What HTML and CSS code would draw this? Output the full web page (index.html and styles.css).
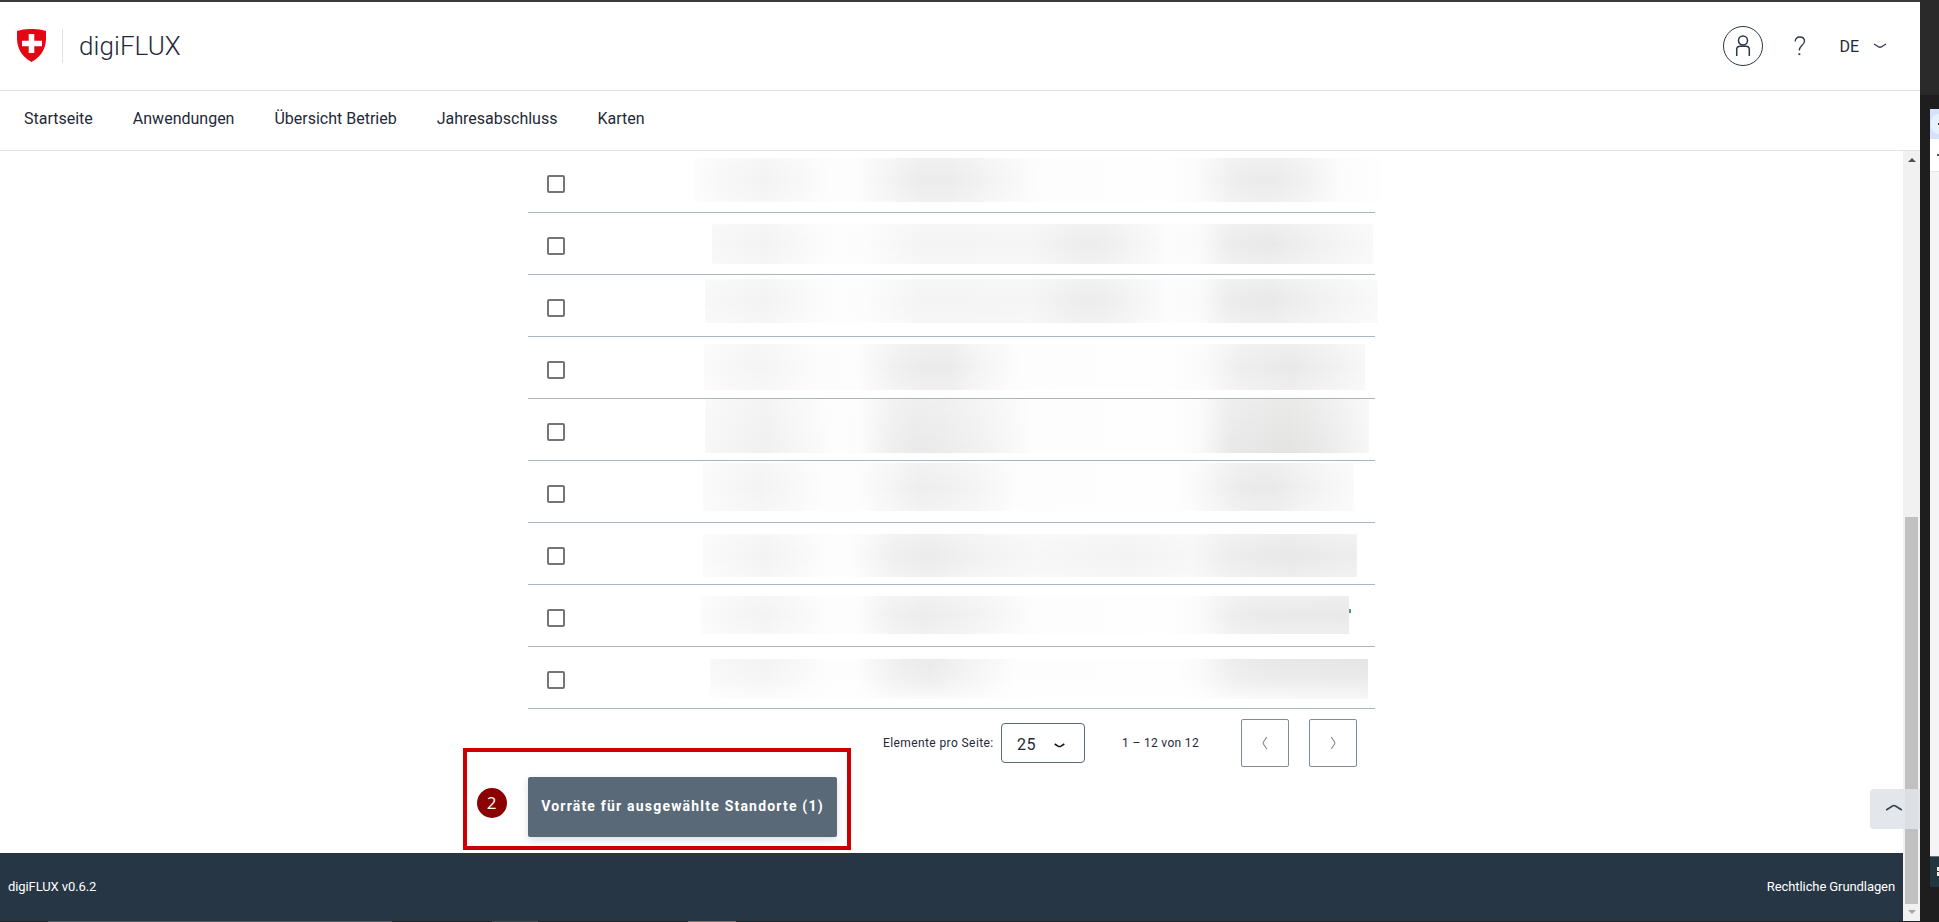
FILE: index.html
```html
<!DOCTYPE html>
<html lang="de">
<head>
<meta charset="utf-8">
<title>digiFLUX</title>
<link rel="stylesheet" href="styles.css">
</head>
<body>
<div class="desktop">
  <div class="app">
    <header class="header">
      <svg class="shield" width="29" height="33" viewBox="0 0 29 33"><path fill="#e30613" d="M0 2C9-.7 20-.7 29 2c.3 12 .3 22-14.500 31C-.3 24-.3 14 0 2z"/><path fill="#fff" d="M11.700 5h5.600v6.700H25v5.600h-7.700V24h-5.600v-6.700H5v-5.600h6.700z"/></svg>
      <span class="divider"></span>
      <span class="brand">digiFLUX</span>
      <div class="tools">
        <span class="user"><svg width="16" height="24" viewBox="0 0 16 24" fill="none" stroke="#2a3746" stroke-width="1.500"><circle cx="8" cy="6.500" r="4.500"/><path d="M1.700 22v-6.500c0-2 1.300-3.300 3.300-3.300h6c2 0 3.300 1.300 3.300 3.300V22"/></svg></span>
        <svg class="help" width="12" height="20" viewBox="0 0 12 20" fill="none" stroke="#2a3746" stroke-width="1.300"><path d="M1.200 5.500C1.200 2.700 3 1 5.800 1s4.700 1.700 4.700 4.300c0 3.900-5.200 4.200-5.200 9.200"/><path d="M4.400 18.200h1.900" stroke-width="1.800"/></svg>
        <span class="lang">DE</span>
        <svg width="14" height="6" viewBox="0 0 14 6" fill="none" stroke="#2a3746" stroke-width="1.200"><path d="M1 1l4 2.600c1.400.7 2.600.7 4 0L13 1"/></svg>
      </div>
    </header>
    <nav class="nav"><a>Startseite</a><a>Anwendungen</a><a>Übersicht Betrieb</a><a>Jahresabschluss</a><a>Karten</a></nav>
    <div class="view">
      <div class="page">
        <main class="content">
          <div class="row"><i class="check"></i><div class="veil v1"></div></div>
          <div class="row"><i class="check"></i><div class="veil v2 long"></div></div>
          <div class="row"><i class="check"></i><div class="veil v3 long"></div></div>
          <div class="row"><i class="check"></i><div class="veil v4"></div></div>
          <div class="row"><i class="check"></i><div class="veil v5 dark"></div></div>
          <div class="row"><i class="check"></i><div class="veil v6"></div></div>
          <div class="row"><i class="check"></i><div class="veil v7 filled"></div></div>
          <div class="row"><i class="check"></i><div class="veil v8"></div><i class="speck"></i></div>
          <div class="row"><i class="check"></i><div class="veil v9"></div></div>
          <div class="pager">
            <span class="label">Elemente pro Seite:</span>
            <span class="select">25<svg width="11" height="6" viewBox="0 0 11 6" fill="none" stroke="#111" stroke-width="1.500"><path d="M.7 1l3.300 2.100c1.100.6 1.900.6 3 0L10.300 1"/></svg></span>
            <span class="range">1 – 12 von 12</span>
            <span class="step"><svg width="6" height="14" viewBox="0 0 6 14" fill="none" stroke="#7b8896" stroke-width="1.100"><path d="M4.800 1L1.700 5.500c-.7 1-.7 2 0 3L4.800 13"/></svg></span>
            <span class="step"><svg width="6" height="14" viewBox="0 0 6 14" fill="none" stroke="#7b8896" stroke-width="1.100"><path d="M1.200 1l3.100 4.500c.7 1 .7 2 0 3L1.200 13"/></svg></span>
          </div>
          <button class="action">Vorräte für ausgewählte Standorte (1)</button>
        </main>
        <footer class="footer"><span>digiFLUX v0.6.2</span><span>Rechtliche Grundlagen</span></footer>
      </div>
      <div class="scroll"><i class="up"></i><i class="thumb"></i><i class="down"></i></div>
    </div>
    <div class="taskbar"><i class="t1"></i><i class="t2"></i><i class="t3"></i></div>
    <div class="highlight"><span class="number">2</span></div>
    <div class="top"><svg width="18" height="7" viewBox="0 0 18 7" fill="none" stroke="#35414f" stroke-width="1.500"><path d="M1.200 6L7.500 2c1-.6 2-.6 3 0l6.300 4"/></svg></div>
  </div>
  <div class="behind">
    <div class="window"><div class="tab"><i></i></div><div class="bar"><i></i></div><div class="body"></div><div class="foot"><i></i></div></div>
  </div>
</div>
</body>
</html>
```
FILE: styles.css
```css
* { box-sizing: border-box; }
body { margin: 0; overflow: hidden; font-family: Roboto, sans-serif; color: #1f2937; background: #1e1e1e; }
.desktop { display: flex; width: 1939px; height: 922px; }
.app { position: relative; display: flex; flex-direction: column; width: 1920px; background: #fff; border-top: 2px solid #3b393a; }

.header { display: flex; align-items: center; height: 89px; padding: 0 33px 0 17px; border-bottom: 1px solid #e0e1e4; }
.shield { margin-top: -1px; }
.divider { width: 1px; height: 34px; margin: 0 16px; background: #dfe1e4; }
.brand { font-size: 26px; font-weight: 300; line-height: 30px; margin-top: -1px; letter-spacing: .08px; }
.tools { display: flex; align-items: center; margin-left: auto; }
.user { display: flex; align-items: center; justify-content: center; width: 40px; height: 40px; border: 1px solid #2a3746; border-radius: 50%; }
.help { margin-left: 31px; }
.lang { margin: 1px 14px 0 33px; font-size: 16px; line-height: 20px; }

.nav { display: flex; gap: 40px; height: 60px; padding: 0 24px; align-items: center; font-size: 16px; border-bottom: 1px solid #dfe4e9; }
.nav a { margin-top: -4px; }

.view { display: flex; height: 770px; }
.page { display: flex; flex-direction: column; width: 1903px; }
.content { display: flex; flex-direction: column; width: 847px; height: 702px; margin-left: 528px; }

.row { display: flex; height: 62px; flex: none; border-bottom: 1px solid #acb4c0; }
.check { width: 18px; height: 18px; margin: 24px 0 0 19px; border: 2px solid #757575; border-radius: 2px; flex: none; }
.veil {
  --veil: linear-gradient(90deg, #fdfdfd 0, #f8f8f8 30px, #f3f3f3 75px, #f8f8f8 110px, #fdfdfd 140px, #fdfdfd 165px, #f3f3f3 200px, #ececec 230px, #ececec 260px, #f3f3f3 300px, #fdfdfd 350px, #fefefe 480px, #fbfbfb 505px, #efefef 540px, #ebebeb 565px, #ebebeb 585px, #f2f2f2 620px, #fcfcfc 650px, #fefefe 685px);
  flex: none;
  background-image: linear-gradient(rgba(255,255,255,.25), rgba(255,255,255,0) 50%, rgba(255,255,255,.25)), var(--veil);
  background-size: auto, 700px 100%;
  background-position: 0 0, var(--shift) 0;
}
.long { --veil: linear-gradient(90deg, #f9f9f9 0, #f3f3f3 75px, #f9f9f9 115px, #fdfdfd 145px, #fcfcfc 175px, #f4f4f4 230px, #f5f5f5 340px, #ededed 390px, #ededed 410px, #f3f3f3 440px, #fcfcfc 480px, #fafafa 510px, #ececec 540px, #e9e9e9 580px, #f1f1f1 630px, #fbfbfb 700px); }
.dark { --veil: linear-gradient(90deg, #f9f9f9 0, #f0f0f0 75px, #f7f7f7 110px, #fdfdfd 145px, #fcfcfc 170px, #efefef 200px, #eaeaea 225px, #ebebeb 250px, #f1f1f1 290px, #fdfdfd 345px, #fefefe 480px, #fafafa 510px, #e9e9e9 540px, #e3e3e2 600px, #eaeaea 635px, #f7f7f7 680px); }
.filled { --veil: linear-gradient(90deg, #fcfcfc 0, #f3f3f3 75px, #fdfdfd 140px, #fdfdfd 160px, #efefef 205px, #ebebeb 240px, #f1f1f1 280px, #f7f7f7 345px, #f3f3f3 440px, #f7f7f7 500px, #ededed 540px, #e8e8e8 600px, #eeeeee 670px); }
.v1 { --shift: -4px; margin: 7px 0 0 129px; width: 688px; height: 44px; }
.v2 { --shift: -22px; margin: 11px 0 0 147px; width: 661px; height: 40px; }
.v3 { --shift: -15px; margin: 4px 0 0 140px; width: 673px; height: 44px; }
.v4 { --shift: -14px; margin: 7px 0 0 139px; width: 661px; height: 46px; --veil: linear-gradient(90deg, #fcfcfc 0, #f4f4f4 70px, #fcfcfc 130px, #fdfdfd 165px, #f0f0f0 205px, #ebebeb 235px, #ebebeb 260px, #f3f3f3 285px, #fdfdfd 330px, #fefefe 480px, #fafafa 515px, #eeeeee 550px, #e9e9e9 600px, #f0f0f0 640px, #f8f8f8 680px); }
.v5 { --shift: -15px; margin: 0 0 0 140px; width: 664px; height: 54px; background-image: linear-gradient(rgba(255,255,255,.25), rgba(255,255,255,0)), var(--veil); }
.v6 { --shift: -13px; margin: 2px 0 0 138px; width: 651px; height: 48px; --veil: linear-gradient(90deg, #fcfcfc 0, #f3f3f3 70px, #fdfdfd 135px, #fdfdfd 165px, #f4f4f4 205px, #eeeeee 230px, #f0f0f0 255px, #f4f4f4 285px, #fdfdfd 330px, #fefefe 485px, #fafafa 505px, #ededed 545px, #eaeaea 565px, #eaeaea 585px, #f1f1f1 615px, #fafafa 665px); }
.v7 { --shift: -13px; margin: 11px 0 0 138px; width: 654px; height: 43px; }
.v8 { --shift: -11px; margin: 11px 0 0 136px; width: 648px; height: 38px; --veil: linear-gradient(90deg, #fcfcfc 0, #f3f3f3 75px, #fdfdfd 140px, #fdfdfd 165px, #f1f1f1 200px, #ececec 235px, #f3f3f3 290px, #fdfdfd 345px, #fefefe 480px, #fafafa 510px, #ededed 545px, #eaeaea 580px, #e9e9e9 660px); }
.v9 { --shift: -20px; margin: 12px 0 0 145px; width: 658px; height: 40px; --veil: linear-gradient(90deg, #fafafa 0, #f3f3f3 75px, #fdfdfd 140px, #fdfdfd 165px, #eeeeee 210px, #eaeaea 240px, #f4f4f4 285px, #fdfdfd 325px, #fefefe 485px, #fafafa 510px, #ececec 545px, #e8e8e8 580px, #e5e5e5 678px); background-image: linear-gradient(rgba(255,255,255,0), rgba(255,255,255,.2) 50%, rgba(255,255,255,.75)), var(--veil); }
.speck { width: 2px; height: 4px; margin-top: 24px; background: linear-gradient(135deg, #c48a40, #3a8fc5 60%); }

.pager { display: flex; align-items: center; height: 68px; padding: 0 18px 0 355px; flex: none; font-size: 12px; letter-spacing: .4px; }
.label { width: 118px; white-space: nowrap; }
.select { display: flex; align-items: center; justify-content: space-between; width: 84px; height: 40px; padding: 3px 19px 0 15px; border: 1px solid #596978; border-radius: 4px; font-size: 16px; letter-spacing: .5px; }
.select svg { margin-top: 3px; }
.range { margin: 0 auto 0 37px; letter-spacing: .33px; white-space: nowrap; }
.step { display: flex; align-items: center; justify-content: center; width: 48px; height: 48px; border: 1px solid #7e8c99; border-radius: 2px; }
.step + .step { margin-left: 20px; }

.action { width: 309px; height: 60px; padding: 0 0 2px; border: 0; border-radius: 2px; background: #596978; color: #fff; font: 700 14px Roboto, sans-serif; letter-spacing: 1.2px; white-space: nowrap; box-shadow: 0 3px 8px rgba(0,0,0,.13); }

.footer { display: flex; justify-content: space-between; align-items: center; height: 68px; padding: 0 8px 2px; background: #263645; color: #fff; font-size: 13px; letter-spacing: -.09px; }

.scroll { display: flex; flex-direction: column; align-items: center; width: 17px; background: #f1f1f1; }
.up { margin-top: 7px; border: 4px solid transparent; border-top: 0; border-bottom-color: #505050; }
.thumb { width: 13px; height: 387px; margin: 355px 0 6px; background: #c1c1c1; }
.down { border: 4px solid transparent; border-bottom: 0; border-top-color: #a3a3a3; }

.taskbar { display: flex; height: 1px; background: #1f2326; }
.t1 { width: 344px; margin-left: 48px; background: #555b60; }
.t2 { width: 46px; margin-left: 100px; background: #454a4e; }
.t3 { width: 48px; margin-left: 150px; background: #a4653a; }

.highlight { position: absolute; left: 463px; top: 746px; width: 388px; height: 102px; border: 4px solid #c00; }
.number { position: absolute; left: 10px; top: 36px; width: 30px; height: 30px; padding-right: 1px; border-radius: 50%; background: #8b0000; color: #fff; font: 17px/29px "Open Sans", sans-serif; text-align: center; }
.top { position: absolute; right: 0; top: 787px; width: 50px; height: 40px; padding: 15px 0 0 15px; border-radius: 4px 0 0 4px; background: rgba(223,227,232,.88); line-height: 0; }

.behind { width: 19px; padding: 109px 0 0 10px; background: linear-gradient(#2a2a2a 95px, #1e1e1e 95px); }
.window { width: 9px; height: 778px; overflow: hidden; background: #f3f5f7; }
.tab { height: 30px; padding: 5px 0 0 1px; background: #d3e3fd; }
.tab i { display: block; width: 20px; height: 20px; border-radius: 8px; background: radial-gradient(circle at 8px 10px, #333 1px, #e8f1fe 1.500px); }
.bar { height: 33px; padding: 15px 0 0 7px; background: #fff; border-bottom: 1px solid #e4e6e8; }
.bar i { display: block; width: 2px; height: 2px; background: #555; }
.body { height: 684px; }
.foot { height: 31px; padding: 10px 0 0 7px; background: #21363e; border-top: 1px solid #6d7476; }
.foot i { display: block; width: 2px; height: 9px; background: repeating-linear-gradient(#eee 0 4px, #21363e 4px 5px); }
```
